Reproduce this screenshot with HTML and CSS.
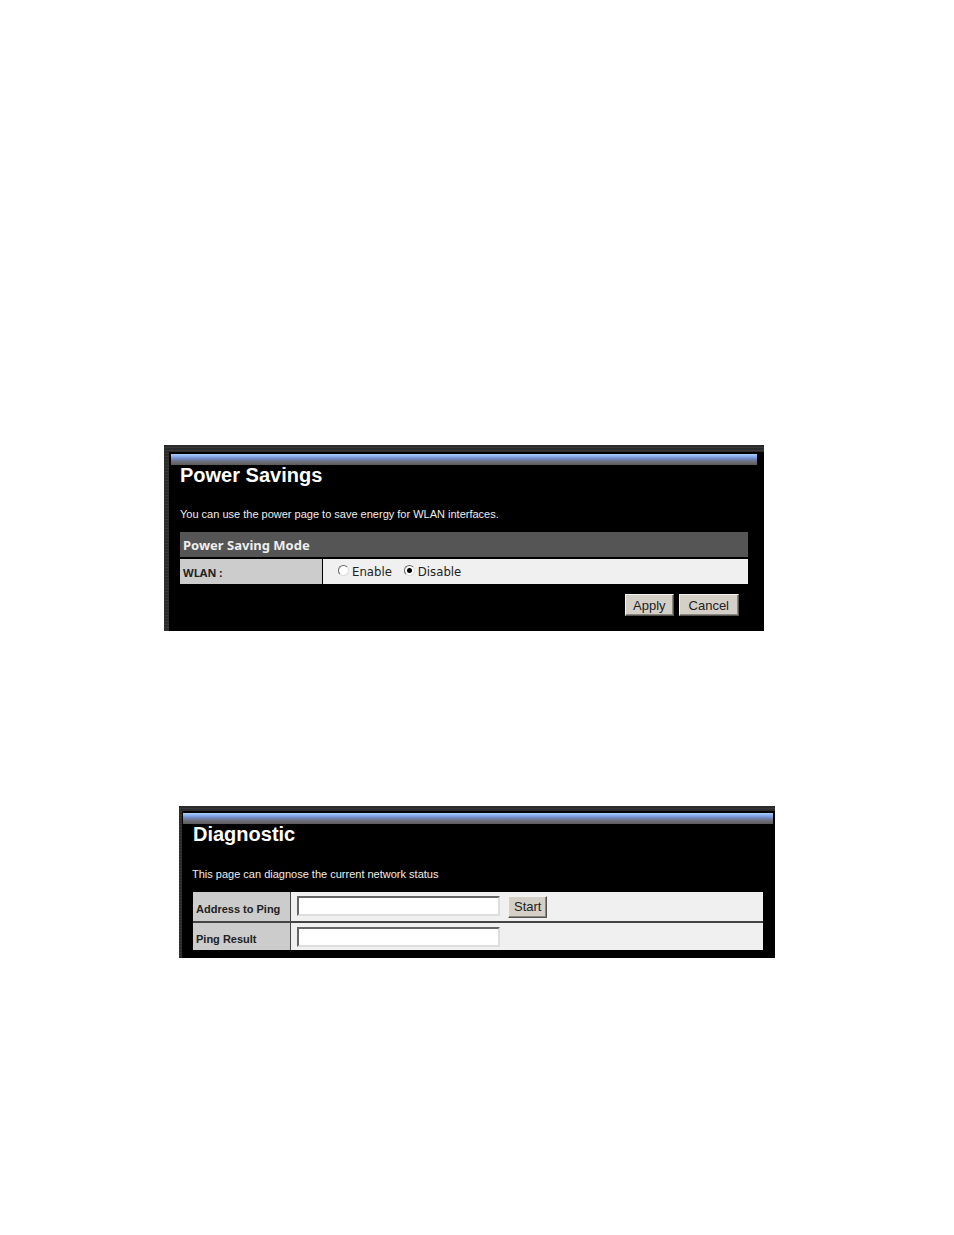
FILE: index.html
```html
<!DOCTYPE html>
<html lang="en">

<head>
    <meta charset="UTF-8">
    <meta name="viewport" content="width=device-width, initial-scale=1.0">
    <title>Power Savings / Diagnostic</title>
    <link rel="stylesheet" href="styles.css">
</head>

<body>

    <!-- power savings -->
    <form class="panel power">
        <div class="content">
            <div class="bar"></div>
            <h1>Power Savings</h1>
            <p class="desc">You can use the power page to save energy for WLAN interfaces.</p>
            <table>
                <tr>
                    <th class="head" colspan="2">Power Saving Mode</th>
                </tr>
                <tr>
                    <th class="label" id="wlan">WLAN :</th>
                    <td>
                        <div class="options" role="radiogroup" aria-labelledby="wlan">
                            <label><input type="radio" name="wlan" value="1">Enable</label>
                            <label><input type="radio" name="wlan" value="0" checked>Disable</label>
                        </div>
                    </td>
                </tr>
            </table>
            <div class="buttons">
                <button type="button">Apply</button>
                <button type="button">Cancel</button>
            </div>
        </div>
    </form>

    <!-- diagnostic -->
    <form class="panel diagnostic">
        <div class="content">
            <div class="bar"></div>
            <h1>Diagnostic</h1>
            <p class="desc">This page can diagnose the current network status</p>
            <table>
                <tr>
                    <th class="label"><label for="address">Address to Ping</label></th>
                    <td>
                        <div class="field">
                            <input type="text" id="address">
                            <button type="button">Start</button>
                        </div>
                    </td>
                </tr>
                <tr>
                    <th class="label"><label for="result">Ping Result</label></th>
                    <td>
                        <div class="field">
                            <input type="text" id="result">
                        </div>
                    </td>
                </tr>
            </table>
        </div>
    </form>

</body>

</html>
```
FILE: styles.css
```css
* {
    margin: 0;
    padding: 0;
    box-sizing: border-box;
}

body {
    padding: 445px 179px 277px 164px;
    background-color: white;
    font-family: "Liberation Sans", Arial, sans-serif;
}

/* dark striped frame on the top and left */
.panel {
    padding: 7px 0 0 5px;
    background: repeating-linear-gradient(#2b2b2b 0 2px, #383838 2px 3px);
}

.content {
    padding: 2px 0 0 2px;
    background-color: black;
}

.bar {
    height: 11px;
    background: linear-gradient(#a9d0fb 0, #86a8e8 25%, #6f86c4 45%, #70727e 65%, #5c5a5a 100%);
}

h1 {
    color: white;
    font-size: 20px;
    line-height: 20px;
}

.desc {
    color: #eee;
    font-size: 11px;
    line-height: 16px;
}

table {
    border-collapse: separate;
    border-spacing: 0;
}

th {
    text-align: left;
}

.label {
    background-color: #ccc;
    color: #222;
    font-size: 11px;
}

td {
    background-color: #f0f0f0;
}

button {
    height: 22px;
    border: 1px solid;
    border-color: #f4f2ee #55534f #55534f #f4f2ee;
    box-shadow: inset -1px -1px #8a8780;
    background-color: #d4d0c8;
    color: #222;
    font-family: inherit;
    font-size: 13px;
}

/* power savings */
.power {
    margin-right: 11px;
}

.power .content {
    padding-right: 7px;
    padding-bottom: 15px;
}

.power h1,
.power .desc {
    margin-left: 9px;
}

.power .desc {
    margin-top: 21px;
}

.power table {
    width: calc(100% - 18px);
    margin: 10px 9px 0;
}

.power .head {
    height: 25px;
    padding-left: 3px;
    background-color: #555;
    color: #eee;
    font-family: "Noto Sans", Tahoma, sans-serif;
    font-size: 13px;
    line-height: 18px;
}

.power .label,
.power td {
    height: 27px;
    border-top: 2px solid black;
}

.power .label {
    width: 143px;
    padding: 3px 0 0 3px;
    border-right: 1px solid black;
    font-family: "Noto Sans", Tahoma, sans-serif;
    line-height: 18px;
}

.options {
    display: flex;
    gap: 12px;
    padding-left: 15px;
    color: #222;
    font-family: "DejaVu Sans Condensed", "DejaVu Sans", sans-serif;
    font-size: 13px;
    line-height: 18px;
}

.options label {
    display: flex;
    gap: 3px;
}

.options input {
    width: 11px;
    height: 11px;
    margin-top: 2px;
    appearance: none;
    border: 1px solid;
    border-color: #666 #ddd #ddd #666;
    border-radius: 50%;
    background-color: white;
}

.options input:checked {
    background-image: radial-gradient(circle, black 2px, transparent 3px);
}

.buttons {
    display: flex;
    justify-content: flex-end;
    gap: 5px;
    margin: 10px 18px 0 0;
}

.buttons button {
    padding: 0 7px;
}

.buttons button:last-child {
    padding: 0 9px;
}

/* diagnostic */
.diagnostic {
    margin: 175px 0 0 15px;
    padding: 5px 0 0 3px;
}

.diagnostic .content {
    padding: 2px 2px 8px 1px;
}

.diagnostic h1 {
    margin-left: 10px;
}

.diagnostic .desc {
    margin: 22px 0 0 9px;
}

.diagnostic table {
    width: calc(100% - 20px);
    margin: 10px 10px 0;
}

.diagnostic .label {
    width: 98px;
    padding: 4px 0 0 3px;
    border-right: 1px solid #444;
}

.diagnostic .label,
.diagnostic td {
    height: 29px;
}

.diagnostic tr + tr .label,
.diagnostic tr + tr td {
    border-top: 2px solid #444;
}

.field {
    display: flex;
    gap: 8px;
    padding-left: 6px;
}

.field input {
    width: 203px;
    height: 20px;
    border: 2px solid;
    border-color: #666 #ddd #ddd #666;
    background-color: white;
    font-size: 12px;
}

.field button {
    padding: 0 5px;
}
```
